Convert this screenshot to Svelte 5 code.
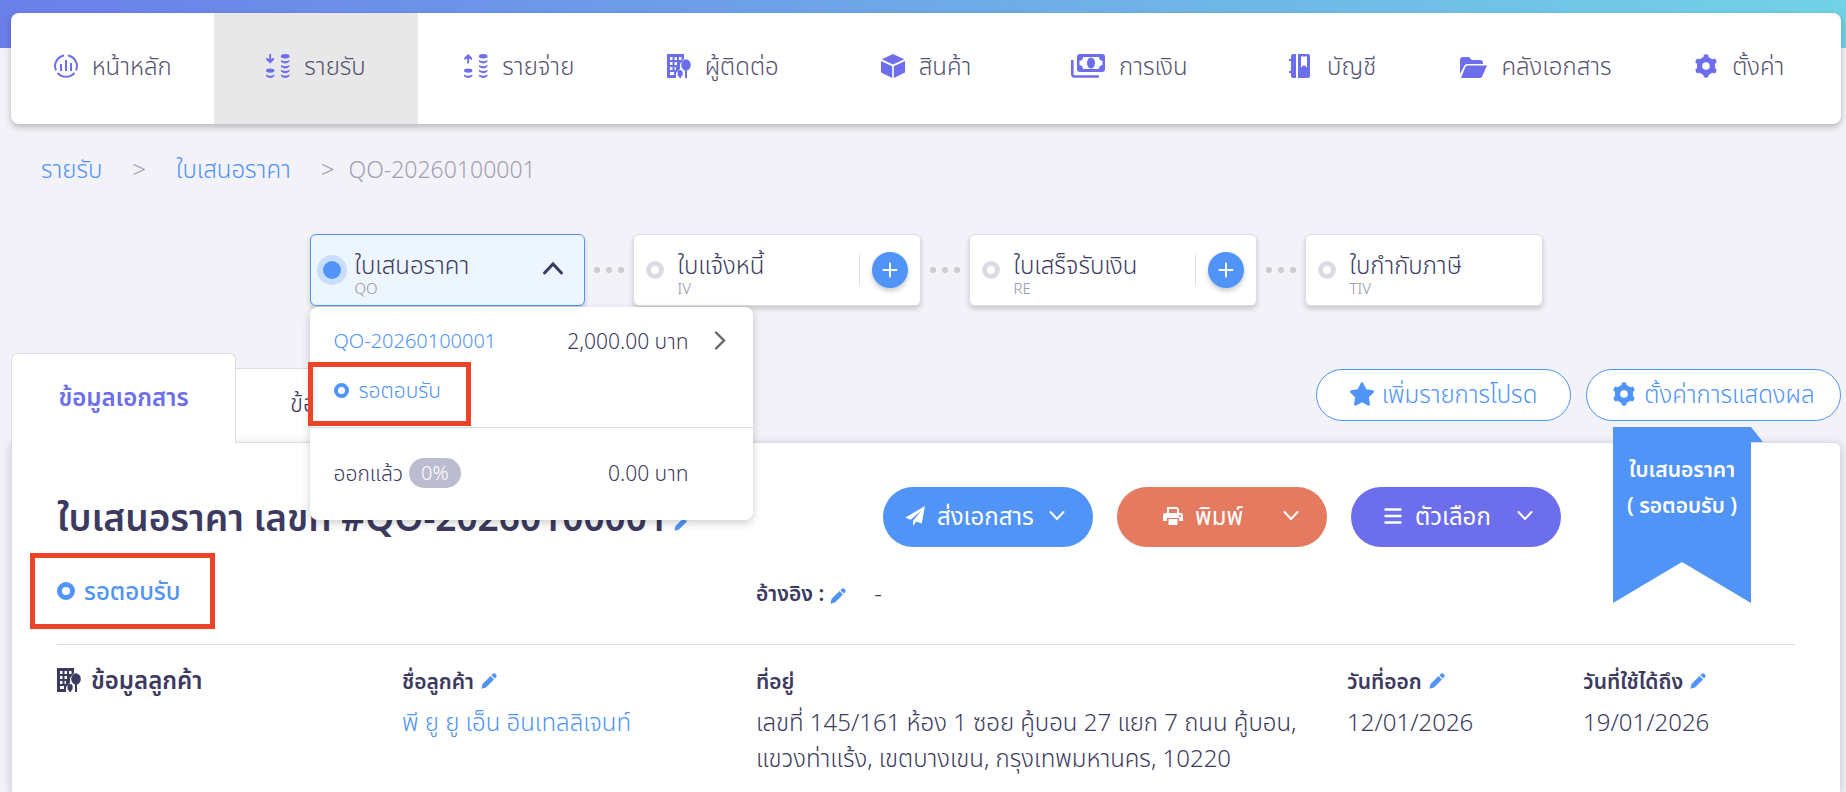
<script>
	let menu = [
		{ icon: 'chart', label: 'หน้าหลัก' },
		{ icon: 'income', label: 'รายรับ', active: true },
		{ icon: 'expense', label: 'รายจ่าย' },
		{ icon: 'building', label: 'ผู้ติดต่อ' },
		{ icon: 'cube', label: 'สินค้า' },
		{ icon: 'money', label: 'การเงิน' },
		{ icon: 'book', label: 'บัญชี' },
		{ icon: 'folder', label: 'คลังเอกสาร' },
		{ icon: 'gear', label: 'ตั้งค่า' }
	];

	let nextSteps = [
		{ name: 'ใบแจ้งหนี้', code: 'IV', add: true },
		{ name: 'ใบเสร็จรับเงิน', code: 'RE', add: true },
		{ name: 'ใบกำกับภาษี', code: 'TIV', add: false }
	];

	let docNo = 'QO-20260100001';
	let status = 'รอตอบรับ';
	let open = $state(true);
</script>

{#snippet icon(name)}
	{#if name === 'chart'}
		<svg class="icon" viewBox="0 0 24 24" fill="none" stroke="currentColor" stroke-width="2">
			<path d="M10 1.4A10.8 10.8 0 0 0 2 16.4M14 1.4a10.8 10.8 0 0 1 8 15M3.6 18.8a10.8 10.8 0 0 0 16.8 0" />
			<path d="M7 10v7M12 6v11M17 9v8" />
		</svg>
	{:else if name === 'income' || name === 'expense'}
		<svg class="icon" viewBox="0 0 24 24" fill="currentColor">
			{#if name === 'income'}
				<path d="M3.2 0h1.9v5l2.9-1.500v2.200L4.200 9.500.3 5.700V3.500L3.200 5z" />
			{:else}
				<path d="M3.2 9.500h1.900V4.500l2.900 1.500V3.800L4.200 0 .3 3.800V6l2.900-1.500z" />
			{/if}
			<ellipse cx="4.2" cy="16.6" rx="4.2" ry="2.200" />
			<ellipse cx="19.2" cy="2.3" rx="4.3" ry="2.200" />
			<path d="M0 20.600q4.200 2.400 8.400 0v1.700q-4.200 3.200-8.400 0zM15 6q4.200 2.400 8.400 0v1.700q-4.200 3.400-8.400 0zM15 11q4.200 2.400 8.400 0v1.700q-4.200 3.400-8.400 0zM15 15.800q4.200 2.400 8.400 0v1.700q-4.200 3.400-8.400 0zM15 20.600q4.200 2.400 8.400 0v1.700q-4.200 3.200-8.400 0z" />
		</svg>
	{:else if name === 'building'}
		<svg class="icon" viewBox="0 0 24 24" fill="currentColor">
			<path fill-rule="evenodd" d="M0 0h17v5l-4 5v5l-4 4v5H0zM3 3v3h2.500V3zM7.500 3v3H10V3zM12 3v3h2.500V3zM3 8v3h2.500V8zM7.500 8v3H10V8zM3 13v3h2.500v-3zM7.500 13v3H9v-3zM3 18v3h4v-3z" />
			<ellipse cx="19" cy="11" rx="4.800" ry="5.800" />
			<path d="M18 15h2v9h-2zM12.300 21h1.600v3h-1.600z" />
			<ellipse cx="13.100" cy="19.500" rx="2.600" ry="3.400" />
		</svg>
	{:else if name === 'cube'}
		<svg class="icon" viewBox="0 0 24 24" fill="currentColor">
			<path d="M12 0l11.200 5.200L12 10.500.8 5.200zM0 7l11.200 5.200V24L0 18.500zM24 7l-11.200 5.200V24L24 18.500z" />
		</svg>
	{:else if name === 'money'}
		<svg class="icon wide" viewBox="0 0 34 24">
			<path fill="currentColor" fill-rule="evenodd" d="M9 0h22a3 3 0 0 1 3 3v12a3 3 0 0 1-3 3H9a3 3 0 0 1-3-3V3a3 3 0 0 1 3-3zM12 3a4 4 0 0 1-3.500 4v4a4 4 0 0 1 3.500 4h16a4 4 0 0 1 3.500-4V7A4 4 0 0 1 28 3z" />
			<ellipse cx="20" cy="9" rx="4" ry="5.500" fill="currentColor" />
			<path d="M1.300 6v14a2.500 2.500 0 0 0 2.500 2.500H28" fill="none" stroke="currentColor" stroke-width="2.600" />
		</svg>
	{:else if name === 'book'}
		<svg class="icon" viewBox="0 0 24 24" fill="currentColor">
			<path d="M4 0h3v24H4a2 2 0 0 1-2-2v-3H0v-2h2V7H0V5h2V2a2 2 0 0 1 2-2z" />
			<path fill-rule="evenodd" d="M9 0h10a2 2 0 0 1 2 2v20a2 2 0 0 1-2 2H9zM12 2.500v11l3-2.500 3 2.500v-11z" />
		</svg>
	{:else if name === 'folder'}
		<svg class="icon folder" viewBox="0 0 27 24" fill="currentColor">
			<path d="M0 6a3 3 0 0 1 3-3h6l3 3h8a3 3 0 0 1 3 3v1H7a3 3 0 0 0-2.700 1.700L0 20z" />
			<path d="M7.500 11.500H27L22.400 22a2.500 2.500 0 0 1-2.300 2H1L5.400 13a2.300 2.300 0 0 1 2.100-1.500z" />
		</svg>
	{:else if name === 'gear'}
		<svg class="icon" viewBox="0 0 24 24" fill="currentColor">
			<circle cx="12" cy="12" r="6.500" fill="none" stroke="currentColor" stroke-width="5.400" />
			{#each [0, 60, 120, 180, 240, 300] as angle}
				<path d="M9.800 1Q12-.4 14.200 1l.8 4.500H9z" transform="rotate({angle} 12 12)" />
			{/each}
		</svg>
	{:else if name === 'star'}
		<svg class="icon" viewBox="24 0 528 512" fill="currentColor">
			<path d="M381.200 150.300L524.900 171.500C536.800 173.200 546.800 181.600 550.600 193.100C554.400 204.700 551.300 217.300 542.700 225.900L438.500 328.100L463.100 474.700C465.100 486.700 460.200 498.900 450.200 506C440.300 513.100 427.200 514 416.500 508.300L288.100 439.800L159.800 508.300C149 514 135.900 513.100 126 506C116.100 498.900 111.100 486.700 113.200 474.700L137.800 328.100L33.600 225.900C25 217.300 21.900 204.700 25.700 193.100C29.500 181.600 39.400 173.200 51.400 171.500L195 150.300L259.400 18C264.700 7 275.800 0 288.100 0C300.400 0 311.600 7 316.900 18L381.200 150.300z" />
		</svg>
	{:else if name === 'send'}
		<svg class="icon" viewBox="0 0 20 20" fill="currentColor">
			<path d="M20 0l-3.200 17.600-5.400-2.200L8 20v-5.200L16.500 4.500 5.600 13.800.4 11.600z" />
		</svg>
	{:else if name === 'print'}
		<svg class="icon" viewBox="0 0 20 20" fill="currentColor">
			<path fill-rule="evenodd" d="M4 1h10l2 2v5h-2V3H6v5H4z" />
			<path fill-rule="evenodd" d="M2.500 7h15A2.500 2.500 0 0 1 20 9.500V15h-4v-3H4v3H0V9.500A2.500 2.500 0 0 1 2.500 7zM17 9a1 1 0 1 0 .1 0z" />
			<path d="M5.500 13h9v6h-9z" />
		</svg>
	{:else if name === 'bars'}
		<svg class="icon" viewBox="0 0 20 20" fill="none" stroke="currentColor" stroke-width="2.400" stroke-linecap="round">
			<path d="M2.500 3.500h15M2.500 10h15M2.500 16.500h15" />
		</svg>
	{:else if name === 'down'}
		<svg class="arrow" viewBox="0 0 16 16" fill="none" stroke="currentColor" stroke-width="2" stroke-linecap="round">
			<path d="M1.500 4L8 11l6.500-7" />
		</svg>
	{:else if name === 'up'}
		<svg class="chevron" viewBox="0 0 22 22" fill="none" stroke="currentColor" stroke-width="3" stroke-linecap="round">
			<path d="M2.500 14L11 5l8.500 9" />
		</svg>
	{:else if name === 'right'}
		<svg class="chevron" viewBox="0 0 22 22" fill="none" stroke="#666" stroke-width="2.400" stroke-linecap="round">
			<path d="M7 2.500l8 8-8 8" />
		</svg>
	{:else if name === 'plus'}
		<svg class="plus" viewBox="0 0 16 16" stroke="currentColor" stroke-width="2" stroke-linecap="round">
			<path d="M8 1.500v13M1.500 8h13" />
		</svg>
	{/if}
{/snippet}

{#snippet pen()}
	<button class="pen" aria-label="แก้ไข">
		<svg viewBox="0 0 16 16" fill="currentColor">
			<path d="M9.500 3l3.500 3.500-8 8L.4 15.700 1.500 11zM10.400 2.200l1-1a2.200 2.200 0 0 1 3.400 3.400l-1 1z" />
		</svg>
	</button>
{/snippet}

<div class="page">
	<nav>
		{#each menu as item}
			<a href="#menu" class:active={item.active}>
				{@render icon(item.icon)}
				<span>{item.label}</span>
			</a>
		{/each}
	</nav>

	<div class="crumbs">
		<a href="#income">รายรับ</a>
		<span class="sep">&gt;</span>
		<a href="#quotation">ใบเสนอราคา</a>
		<span class="sep">&gt;</span>
		<span class="current">{docNo}</span>
	</div>

	<div class="flow">
		<div class="step-wrap">
			<button class="step first" onclick={() => (open = !open)}>
				<span class="dot on"></span>
				<span class="names">
					<span class="name">ใบเสนอราคา</span>
					<span class="code">QO</span>
				</span>
				{@render icon('up')}
			</button>
			{#if open}
				<div class="dropdown">
					<div class="drop-row">
						<a href="#doc">{docNo}</a>
						<span class="amount">2,000.00 บาท</span>
						{@render icon('right')}
					</div>
					<div class="mark small">
						<span class="ring"></span>
						<span>{status}</span>
					</div>
					<div class="drop-row total">
						<span>ออกแล้ว</span>
						<span class="badge">0%</span>
						<span class="amount">0.00 บาท</span>
					</div>
				</div>
			{/if}
		</div>
		{#each nextSteps as step}
			<div class="dots"><i></i><i></i><i></i></div>
			<div class="step" class:last={!step.add}>
				<span class="dot"></span>
				<span class="names">
					<span class="name">{step.name}</span>
					<span class="code">{step.code}</span>
				</span>
				{#if step.add}
					<span class="line"></span>
					<button class="add" aria-label="สร้าง{step.name}">{@render icon('plus')}</button>
				{/if}
			</div>
		{/each}
	</div>

	<div class="tab-bar">
		<button class="tab active">ข้อมูลเอกสาร</button>
		<button class="tab">ข้อ</button>
		<div class="tools">
			<button class="outline">{@render icon('star')}เพิ่มรายการโปรด</button>
			<button class="outline">{@render icon('gear')}ตั้งค่าการแสดงผล</button>
		</div>
	</div>

	<main>
		<div class="ribbon">
			<svg viewBox="0 0 150 176" fill="#5094f8">
				<path d="M0 0h138v176l-69-41-69 41z" />
				<path d="M138 0l12 15h-12z" />
			</svg>
			<div class="ribbon-text">ใบเสนอราคา<br />( {status} )</div>
		</div>

		<div class="head">
			<h1>ใบเสนอราคา เลขที่ #{docNo}{@render pen()}</h1>
			<div class="actions">
				<button class="send">{@render icon('send')}<span>ส่งเอกสาร</span>{@render icon('down')}</button>
				<button class="print">{@render icon('print')}<span>พิมพ์</span>{@render icon('down')}</button>
				<button class="options">{@render icon('bars')}<span>ตัวเลือก</span>{@render icon('down')}</button>
			</div>
		</div>

		<div class="grid status-row">
			<div class="mark big">
				<span class="ring"></span>
				<span>{status}</span>
			</div>
			<div class="ref"><b>อ้างอิง :</b>{@render pen()}<span>-</span></div>
		</div>

		<div class="grid info">
			<h2>{@render icon('building')}ข้อมูลลูกค้า</h2>
			<div>
				<h3>ชื่อลูกค้า {@render pen()}</h3>
				<a href="#customer">พี ยู ยู เอ็น อินเทลลิเจนท์</a>
			</div>
			<div>
				<h3>ที่อยู่</h3>
				<p>เลขที่ 145/161 ห้อง 1 ซอย คู้บอน 27 แยก 7 ถนน คู้บอน,<br />แขวงท่าแร้ง, เขตบางเขน, กรุงเทพมหานคร, 10220</p>
			</div>
			<div>
				<h3>วันที่ออก {@render pen()}</h3>
				<p>12/01/2026</p>
			</div>
			<div>
				<h3>วันที่ใช้ได้ถึง {@render pen()}</h3>
				<p>19/01/2026</p>
			</div>
		</div>
	</main>
</div>

<style>
	:global(body) {
		background: #f3f2f8;
	}

	.page {
		display: flex;
		flex-direction: column;
		min-height: 100vh;
		box-sizing: border-box;
		padding: 13px 5px 0 11px;
		color: #3c3a60;
		font-family: 'Noto Sans', 'Noto Sans Thai', sans-serif;
		font-size: 24px;
		font-weight: 350;
		line-height: 36px;
		background: linear-gradient(87deg, #6b7fea, #72d2e6) top / 100% 48px no-repeat;
	}

	button {
		font: inherit;
		color: inherit;
		cursor: pointer;
	}

	a {
		color: #5094f8;
		text-decoration: none;
	}

	.icon {
		width: 24px;
		height: 24px;
		flex: none;
	}

	.icon.wide {
		width: 34px;
	}

	.icon.folder {
		width: 27px;
	}

	.chevron {
		width: 22px;
		height: 22px;
		flex: none;
	}

	.arrow, .plus {
		width: 16px;
		height: 16px;
		flex: none;
	}

	nav {
		display: flex;
		height: 111px;
		background: #fff;
		border-radius: 8px;
		box-shadow: 0 3px 6px rgba(0, 0, 0, .25);
	}

	nav a {
		flex: 1;
		display: flex;
		align-items: center;
		justify-content: center;
		gap: 14px;
		padding-bottom: 5px;
		color: #55536f;
	}

	nav a.active {
		background: #e8e8e8;
	}

	nav .icon {
		color: #6c6eec;
	}

	.crumbs {
		display: flex;
		padding: 27px 30px 0;
		color: #a0a0b4;
	}

	.sep {
		margin: 0 30px;
	}

	.sep:nth-of-type(2) {
		margin-right: 14px;
	}

	.current {
		font-size: 23px;
	}

	.flow {
		display: flex;
		justify-content: center;
		padding-top: 47px;
	}

	.step-wrap {
		position: relative;
	}

	.step {
		display: flex;
		align-items: center;
		box-sizing: border-box;
		width: 288px;
		height: 72px;
		padding: 0 12px;
		text-align: left;
		background: #fff;
		border: 1px solid #dcdce6;
		border-radius: 6px;
		box-shadow: 0 3px 5px rgba(0, 0, 0, .18);
	}

	.step.first {
		width: 275px;
		padding: 0 20px 0 12px;
		background: #edf5ff;
		border-color: #5094f8;
	}

	.step.last {
		width: 238px;
	}

	.dot {
		box-sizing: border-box;
		width: 18px;
		height: 18px;
		border: 5px solid #dcdce6;
		border-radius: 50%;
	}

	.dot.on {
		background: #5094f8;
		border: 0;
		box-shadow: 0 0 0 6px #c9deff;
	}

	.names {
		flex: 1;
		display: flex;
		flex-direction: column;
		margin-left: 14px;
		padding-top: 6px;
	}

	.name {
		line-height: 30px;
	}

	.code {
		font-size: 15px;
		line-height: 16px;
		color: #8e8ea4;
	}

	.line {
		width: 1px;
		height: 30px;
		margin-right: 12px;
		background: #dcdce6;
	}

	.add {
		display: grid;
		place-items: center;
		width: 36px;
		height: 36px;
		padding: 0;
		color: #fff;
		background: #5094f8;
		border: 0;
		border-radius: 50%;
		box-shadow: 0 3px 5px rgba(0, 0, 0, .2);
	}

	.dots {
		display: flex;
		align-items: center;
		justify-content: center;
		gap: 6px;
		width: 48px;
	}

	.dots i {
		width: 6px;
		height: 6px;
		border-radius: 50%;
		background: #ccc;
	}

	.dropdown {
		position: absolute;
		z-index: 5;
		top: 73px;
		left: 0;
		width: 443px;
		height: 213px;
		background: #fff;
		border-radius: 8px;
		box-shadow: 0 3px 8px rgba(0, 0, 0, .2);
		font-size: 21px;
	}

	.drop-row {
		display: flex;
		align-items: center;
		height: 55px;
		padding: 12px 22px 0 24px;
		box-sizing: border-box;
	}

	.drop-row a {
		font-size: 20px;
	}

	.drop-row .amount {
		margin-left: auto;
		margin-right: 20px;
	}

	.drop-row.total {
		height: 90px;
		padding: 0 44px 0 24px;
		border-top: 1px solid #dcdce6;
	}

	.badge {
		margin-left: 6px;
		padding: 0 12px;
		font-size: 20px;
		line-height: 30px;
		border-radius: 15px;
		color: #fff;
		background: #bcbcd0;
	}

	.mark {
		display: flex;
		align-items: center;
		box-sizing: border-box;
		color: #5094f8;
		border: 5px solid #ec4226;
	}

	.mark.small {
		width: 163px;
		height: 64px;
		margin: 0 0 1px -2px;
		padding: 0 0 8px 21px;
		gap: 10px;
	}

	.mark.big {
		width: 185px;
		height: 76px;
		margin-left: -27px;
		padding-left: 22px;
		gap: 9px;
		font-weight: 500;
	}

	.ring {
		box-sizing: border-box;
		width: 15px;
		height: 15px;
		border: 4px solid #5094f8;
		border-radius: 50%;
	}

	.big .ring {
		width: 18px;
		height: 18px;
		border-width: 5px;
	}

	.tab-bar {
		display: flex;
		align-items: flex-end;
		padding-top: 47px;
	}

	.tab {
		width: 240px;
		height: 75px;
		padding: 0 54px 6px;
		text-align: left;
		background: #fff;
		border: 1px solid #dcdce6;
		border-left: 0;
	}

	.tab.active {
		position: relative;
		z-index: 1;
		width: 225px;
		height: 90px;
		padding: 0 0 4px;
		text-align: center;
		color: #6c6eec;
		border-left: 1px solid #dcdce6;
		border-bottom: 0;
		border-radius: 6px 6px 0 0;
		font-weight: 600;
	}

	.tools {
		display: flex;
		align-self: flex-start;
		gap: 15px;
		margin: 16px 0 0 auto;
	}

	.outline {
		display: flex;
		align-items: center;
		justify-content: center;
		gap: 8px;
		width: 255px;
		height: 52px;
		padding: 0 0 3px;
		color: #5094f8;
		background: #fff;
		border: 1px solid #5094f8;
		border-radius: 26px;
	}

	main {
		position: relative;
		flex: 1;
		box-sizing: border-box;
		margin-top: -1px;
		padding: 44px 45px 0;
		background: #fff;
		border: 1px solid #dcdce6;
		border-bottom: 0;
		border-radius: 0 6px 0 0;
		box-shadow: 0 2px 8px rgba(60, 58, 96, .25);
	}

	.ribbon {
		position: absolute;
		top: -16px;
		right: 77px;
		width: 150px;
		height: 176px;
	}

	.ribbon-text {
		position: absolute;
		top: 24px;
		left: 0;
		width: 138px;
		color: #fff;
		font-size: 21px;
		font-weight: 600;
		line-height: 36px;
		text-align: center;
	}

	.head {
		display: flex;
		justify-content: space-between;
		align-items: center;
		padding-right: 234px;
	}

	h1, h2, h3, p {
		margin: 0;
	}

	h1 {
		font-size: 37px;
		font-weight: 600;
		line-height: 60px;
		white-space: nowrap;
	}

	.actions {
		display: flex;
		gap: 24px;
	}

	.actions button {
		display: flex;
		align-items: center;
		width: 210px;
		height: 60px;
		padding: 0 28px 3px 22px;
		gap: 12px;
		color: #fff;
		border: 0;
		border-radius: 30px;
		font-weight: 400;
	}

	.actions .icon {
		width: 20px;
		height: 20px;
	}

	.actions .arrow {
		margin-left: auto;
	}

	.actions .send {
		background: #5094f8;
	}

	.actions .print {
		padding-left: 46px;
		background: #e47a60;
	}

	.actions .options {
		padding-left: 32px;
		background: #6c6eec;
	}

	.pen {
		padding: 0;
		border: 0;
		background: none;
		color: #5094f8;
		line-height: 16px;
	}

	.pen svg {
		display: block;
		width: 16px;
		height: 16px;
	}

	.grid {
		display: grid;
		grid-template-columns: 345fr 354fr 591fr 236fr 212fr;
	}

	.status-row {
		padding: 6px 0 15px;
		border-bottom: 1px solid #dcdce6;
	}

	.ref {
		grid-column: 3;
		display: flex;
		align-items: center;
		padding-top: 4px;
	}

	.ref b, h3 {
		font-size: 21px;
		font-weight: 600;
	}

	.ref .pen {
		margin: 6px 28px 0 6px;
	}

	.info {
		padding-top: 17px;
	}

	h2 {
		display: flex;
		align-items: center;
		align-self: start;
		gap: 10px;
		font-size: 24px;
		font-weight: 600;
	}

	h3 {
		display: flex;
		align-items: center;
		gap: 7px;
		margin-bottom: 4px;
		line-height: 38px;
	}

	h1 .pen, h3 .pen {
		display: inline-block;
	}

	h1 .pen {
		margin-left: 6px;
	}
</style>
